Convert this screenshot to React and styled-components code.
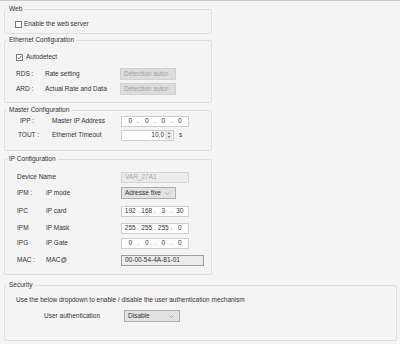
import React from 'react';
import styled, { createGlobalStyle } from 'styled-components';

const GlobalStyle = createGlobalStyle`
  html, body {
    margin: 0;
    padding: 0;
    background: #f4f4f4;
  }
  body {
    font-family: "Liberation Sans", Arial, sans-serif;
    color: #333;
  }
`;

function Chevron() {
  return (
    <svg width="5" height="3" viewBox="0 0 5 3">
      <polyline points="0.5,0.5 2.5,2.5 4.5,0.5" fill="none" stroke="#8a8a8a" strokeWidth="0.7" />
    </svg>
  );
}

function Select({ value, disabled, width }) {
  return (
    <SelectBox $disabled={disabled} $w={width}>
      <span>{value}</span>
      <Chevron />
    </SelectBox>
  );
}

function Checkbox({ checked }) {
  return (
    <Box>
      {checked && (
        <svg width="5" height="5" viewBox="0 0 5 5">
          <polyline points="0.6,2.6 1.9,3.9 4.4,0.9" fill="none" stroke="#444" strokeWidth="0.8" />
        </svg>
      )}
    </Box>
  );
}

function IpInput({ parts }) {
  return (
    <IpBox>
      {parts.map((p, i) => (
        <React.Fragment key={i}>
          {i > 0 && <Dot>.</Dot>}
          <Octet>{p}</Octet>
        </React.Fragment>
      ))}
    </IpBox>
  );
}

function App() {
  return (
    <Page>
      <GlobalStyle />

      <Group $pt={4} $pb={2}>
        <Legend>Web</Legend>
        <CheckRow $indent={10} $gap={2}>
          <Checkbox />
          <span>Enable the web server</span>
        </CheckRow>
      </Group>

      <Group $mt={2} $pt={6} $pb={6}>
        <Legend>Ethernet Configuration</Legend>
        <CheckRow $indent={11} $gap={3}>
          <Checkbox checked />
          <span>Autodetect</span>
        </CheckRow>
        <Row $indent={11} $mt={3}>
          <Code $w={29}>RDS :</Code>
          <Name $w={75}>Rate setting</Name>
          <Select value="Détection autor" disabled width={56} />
        </Row>
        <Row $indent={11} $mt={1}>
          <Code $w={29}>ARD :</Code>
          <Name $w={75}>Actual Rate and Data</Name>
          <Select value="Détection autor" disabled width={56} />
        </Row>
      </Group>

      <Group $mt={3} $pt={0} $pb={8}>
        <Legend>Master Configuration</Legend>
        <Row $indent={15}>
          <Code $w={32}>IPP :</Code>
          <Name $w={69}>Master IP Address</Name>
          <IpInput parts={['0', '0', '0', '0']} />
        </Row>
        <Row $indent={13}>
          <Code $w={34}>TOUT :</Code>
          <Name $w={69}>Ethernet Timeout</Name>
          <SpinBox>
            <SpinValue>10,0</SpinValue>
            <SpinButtons>
              <span>▴</span>
              <span>▾</span>
            </SpinButtons>
          </SpinBox>
          <Unit>s</Unit>
        </Row>
      </Group>

      <Group $mt={4} $pt={7} $pb={7}>
        <Legend>IP Configuration</Legend>
        <Row $indent={12}>
          <Name $w={104}>Device Name</Name>
          <TextBox $variant="disabled">VAR_27A1</TextBox>
        </Row>
        <Row $indent={12} $mt={2}>
          <Code $w={29}>IPM :</Code>
          <Name $w={75}>IP mode</Name>
          <Select value="Adresse fixe" width={55} />
        </Row>
        <Row $indent={12} $mt={4}>
          <Code $w={29}>IPC</Code>
          <Name $w={75}>IP card</Name>
          <IpInput parts={['192', '168', '3', '30']} />
        </Row>
        <Row $indent={12} $mt={3}>
          <Code $w={29}>IPM</Code>
          <Name $w={75}>IP Mask</Name>
          <IpInput parts={['255', '255', '255', '0']} />
        </Row>
        <Row $indent={12} $mt={1}>
          <Code $w={29}>IPG</Code>
          <Name $w={75}>IP Gate</Name>
          <IpInput parts={['0', '0', '0', '0']} />
        </Row>
        <Row $indent={12} $mt={3}>
          <Code $w={29}>MAC :</Code>
          <Name $w={75}>MAC@</Name>
          <TextBox $variant="readonly" $w={83}>00-00-54-4A-81-01</TextBox>
        </Row>
      </Group>

      <Group $mt={6} $pt={4} $pb={17} $wide>
        <Legend>Security</Legend>
        <Row $indent={11}>
          Use the below dropdown to enable / disable the user authentication mechanism
        </Row>
        <Row $indent={39} $mt={2}>
          <Name $w={80}>User authentication</Name>
          <Select value="Disable" width={56} />
        </Row>
      </Group>
    </Page>
  );
}

export default App;

const Page = styled.div`
  width: 400px;
  height: 344px;
  box-sizing: border-box;
  overflow: hidden;
  border-top: 1px solid #c9c9c9;
  padding: 4px 3px 0 4px;
  background: #f4f4f4;
  font-size: 6.5px;
  line-height: 8px;
`;

const Group = styled.fieldset`
  margin: ${p => p.$mt || 0}px 0 0 0;
  width: ${p => (p.$wide ? 'auto' : '208px')};
  min-width: 0;
  box-sizing: border-box;
  border: 1px solid #dfdfdf;
  border-radius: 2px;
  padding: ${p => p.$pt}px 0 ${p => p.$pb}px 0;
`;

const Legend = styled.legend`
  font-size: 6.5px;
  line-height: 8px;
  padding: 0 2px;
  margin-left: 2px;
  color: #333;
`;

const Row = styled.div`
  display: flex;
  align-items: center;
  height: 14px;
  margin-top: ${p => p.$mt || 0}px;
  padding-left: ${p => p.$indent}px;
  white-space: nowrap;
`;

const CheckRow = styled(Row)`
  gap: ${p => p.$gap}px;
`;

const Code = styled.span`
  flex: none;
  width: ${p => p.$w}px;
`;

const Name = styled.span`
  flex: none;
  width: ${p => p.$w}px;
`;

const Box = styled.span`
  flex: none;
  display: flex;
  align-items: center;
  justify-content: center;
  width: 7px;
  height: 7px;
  box-sizing: border-box;
  border: 1px solid #7a7a7a;
  background: #fdfdfd;
`;

const SelectBox = styled.div`
  display: flex;
  align-items: center;
  justify-content: space-between;
  width: ${p => p.$w}px;
  height: 12px;
  box-sizing: border-box;
  padding: 0 5px 0 3px;
  background: ${p => (p.$disabled ? '#dcdcdc' : '#e2e2e2')};
  border: 1px solid ${p => (p.$disabled ? '#d2d2d2' : '#adadad')};
  color: ${p => (p.$disabled ? '#a3a3a3' : '#333')};
`;

const IpBox = styled.div`
  display: flex;
  align-items: center;
  width: 68px;
  height: 11px;
  box-sizing: border-box;
  padding: 0 1px;
  background: #fff;
  border: 1px solid #cdcdcd;
`;

const Octet = styled.span`
  flex: 1;
  text-align: center;
`;

const Dot = styled.span`
  width: 2px;
  text-align: center;
`;

const SpinBox = styled.div`
  display: flex;
  align-items: center;
  width: 53px;
  height: 11px;
  box-sizing: border-box;
  padding-right: 1px;
  background: #fff;
  border: 1px solid #cdcdcd;
`;

const SpinValue = styled.span`
  flex: 1;
  text-align: right;
  padding-right: 1px;
`;

const SpinButtons = styled.span`
  display: flex;
  flex-direction: column;
  justify-content: center;
  width: 7px;
  height: 9px;
  background: #e6e6e6;
  font-size: 4px;
  line-height: 4px;
  text-align: center;
  color: #555;
`;

const Unit = styled.span`
  margin-left: 5px;
`;

const TextBox = styled.div`
  display: flex;
  align-items: center;
  width: ${p => p.$w || 68}px;
  height: 11px;
  box-sizing: border-box;
  padding-left: 3px;
  background: ${p => (p.$variant === 'disabled' ? '#ebebeb' : '#ececec')};
  border: 1px solid ${p => (p.$variant === 'disabled' ? '#d5d5d5' : '#9c9c9c')};
  color: ${p => (p.$variant === 'disabled' ? '#a8a8a8' : '#333')};
`;
